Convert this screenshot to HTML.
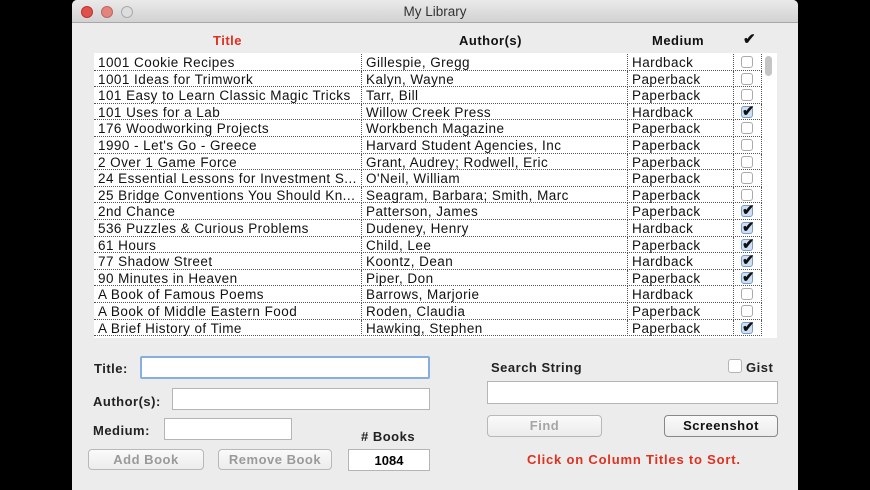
<!DOCTYPE html>
<html><head><meta charset="utf-8"><style>
*{margin:0;padding:0;box-sizing:border-box}
body{width:870px;height:490px;background:#000;font-family:"Liberation Sans",sans-serif;position:relative;overflow:hidden}
#win{position:absolute;left:72px;top:0;width:726px;height:490px;background:#ececec;border-radius:5px 5px 0 0}
#tb{height:23px;background:linear-gradient(#eaeaea,#d2d2d2);border-bottom:1px solid #a8a8a8;border-radius:5px 5px 0 0;text-align:center;font-size:13.5px;line-height:23px;color:#333}
.dot{position:absolute;top:6px;width:12px;height:12px;border-radius:50%}
.a{position:absolute}
.h{position:absolute;top:33px;font-weight:bold;font-size:13px;color:#111;letter-spacing:0.5px}
#tab{position:absolute;left:22px;top:53px;width:683px;height:285px;background:#fff}
.row{position:absolute;left:0;width:668px;height:16.6px;border-bottom:1px dotted #555;font-size:13.5px;line-height:18px;color:#111;letter-spacing:0.45px}
.row span{position:absolute;top:0;height:16.6px;padding-left:4px;white-space:nowrap;overflow:hidden}
.c1{left:0;width:267px}.c2{left:267px;width:266px;border-left:1px dotted #555}.c3{left:533px;width:106px;border-left:1px dotted #555}.c4{left:639px;width:29px;border-left:1px dotted #555;border-right:1px dotted #555}
.cb{position:absolute;left:7px;top:2px;width:12px;height:12px;border:1px solid #aaa;border-radius:3px;background:#fff;font-size:15px;line-height:9px;font-weight:bold;font-style:normal;letter-spacing:0}
.cb.on{background:#cfe0f5;border-color:#7a9cc6}
.lbl{position:absolute;font-weight:bold;font-size:13px;color:#222;letter-spacing:0.5px}
.fld{position:absolute;background:#fff;border:1px solid #b5b5b5}
.btn{position:absolute;border:1px solid #b8b8b8;border-radius:4px;background:linear-gradient(#fafafa,#ececec);text-align:center;font-weight:bold;font-size:13px;line-height:20px;letter-spacing:0.5px}
</style></head><body>
<div id="win">
<div id="tb">My Library</div>
<div class="dot" style="left:9px;background:#e0514a;border:1px solid #b33"></div>
<div class="dot" style="left:29px;background:#e3857b;border:1px solid #b66"></div>
<div class="dot" style="left:49px;background:#ddd;border:1px solid #aaa"></div>
<div class="h" style="left:141px;color:#e0301e">Title</div>
<div class="h" style="left:387px">Author(s)</div>
<div class="h" style="left:580px">Medium</div>
<div class="h" style="left:671px;top:30px;font-size:15px">✔</div>
<div id="tab">
<div class="a" style="left:671px;top:3px;width:7px;height:20px;background:#c5c5c5;border-radius:4px"></div>
</div>
<div id="rows" style="position:absolute;left:22px;top:54px"></div>
<div class="lbl" style="left:22px;top:361px">Title:</div>
<div class="fld" style="left:68px;top:356px;width:290px;height:23px;border:2px solid #86aee0;border-radius:2px"></div>
<div class="lbl" style="left:21px;top:394px">Author(s):</div>
<div class="fld" style="left:100px;top:388px;width:258px;height:22px"></div>
<div class="lbl" style="left:21px;top:423px">Medium:</div>
<div class="fld" style="left:92px;top:418px;width:128px;height:22px"></div>
<div class="lbl" style="left:289px;top:429px"># Books</div>
<div class="fld" style="left:276px;top:449px;width:82px;height:22px;text-align:center;font-weight:bold;font-size:13px;line-height:22px">1084</div>
<div class="btn" style="left:16px;top:449px;width:116px;height:21px;color:#9a9a9a">Add Book</div>
<div class="btn" style="left:146px;top:449px;width:114px;height:21px;color:#9a9a9a">Remove Book</div>
<div class="lbl" style="left:419px;top:360px">Search String</div>
<div class="fld" style="left:656px;top:359px;width:14px;height:14px;border-radius:3px"></div>
<div class="lbl" style="left:674px;top:360px">Gist</div>
<div class="fld" style="left:415px;top:381px;width:291px;height:23px"></div>
<div class="btn" style="left:415px;top:415px;width:115px;height:22px;color:#a5a5a5">Find</div>
<div class="btn" style="left:592px;top:415px;width:114px;height:22px;color:#111;border-color:#888">Screenshot</div>
<div class="lbl" style="left:455px;top:452px;color:#e0301e;letter-spacing:0.8px">Click on Column Titles to Sort.</div>
</div>
<script>
var d=[["1001 Cookie Recipes","Gillespie, Gregg","Hardback",0],["1001 Ideas for Trimwork","Kalyn, Wayne","Paperback",0],["101 Easy to Learn Classic Magic Tricks","Tarr, Bill","Paperback",0],["101 Uses for a Lab","Willow Creek Press","Hardback",1],["176 Woodworking Projects","Workbench Magazine","Paperback",0],["1990 - Let's Go - Greece","Harvard Student Agencies, Inc","Paperback",0],["2 Over 1 Game Force","Grant, Audrey; Rodwell, Eric","Paperback",0],["24 Essential Lessons for Investment S...","O'Neil, William","Paperback",0],["25 Bridge Conventions You Should Kn...","Seagram, Barbara; Smith, Marc","Paperback",0],["2nd Chance","Patterson, James","Paperback",1],["536 Puzzles & Curious Problems","Dudeney, Henry","Hardback",1],["61 Hours","Child, Lee","Paperback",1],["77 Shadow Street","Koontz, Dean","Hardback",1],["90 Minutes in Heaven","Piper, Don","Paperback",1],["A Book of Famous Poems","Barrows, Marjorie","Hardback",0],["A Book of Middle Eastern Food","Roden, Claudia","Paperback",0],["A Brief History of Time","Hawking, Stephen","Paperback",1]];
var h="";d.forEach(function(r,i){h+='<div class="row" style="top:'+(i*16.6)+'px"><span class="c1">'+r[0]+'</span><span class="c2">'+r[1]+'</span><span class="c3">'+r[2]+'</span><span class="c4"><i class="cb'+(r[3]?' on':'')+'">'+(r[3]?'✔':'')+'</i></span></div>'});
document.getElementById('rows').innerHTML=h;
</script>
</body></html>
